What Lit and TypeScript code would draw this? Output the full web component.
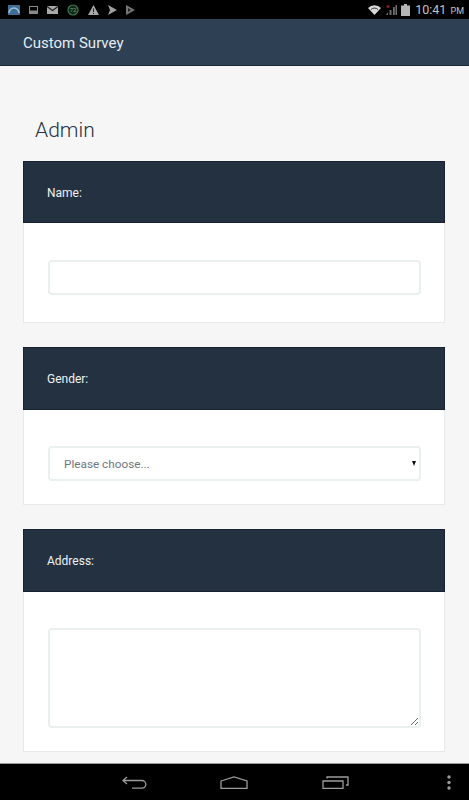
import {LitElement, html, css, svg} from 'lit';
import {customElement, property} from 'lit/decorators.js';

@customElement('survey-panel')
export class SurveyPanel extends LitElement {
  @property()
  label = '';

  static styles = css`
    :host {
      display: block;
      margin-bottom: 24px;
    }
    .head {
      height: 62.5px;
      box-sizing: border-box;
      display: flex;
      align-items: center;
      padding: 1px 0 0 23px;
      background-color: #243140;
      border: 1px solid #18222e;
      color: #eef1f4;
      font-size: 12px;
      font-weight: 400;
    }
    .body {
      background-color: #fff;
      border: 1px solid #e8eaea;
      border-top: 0;
      padding: 36.3px 23px 23.2px 24px;
    }
  `;

  override render() {
    return html`
      <div class="head">${this.label}</div>
      <div class="body"><slot></slot></div>
    `;
  }
}

@customElement('app-root')
export class AppRoot extends LitElement {
  static styles = css`
    :host {
      display: flex;
      flex-direction: column;
      width: 469px;
      height: 800px;
      overflow: hidden;
      font-family: Roboto, "Liberation Sans", sans-serif;
      background-color: #f6f6f6;
    }
    .status {
      height: 19px;
      flex: none;
      display: flex;
      align-items: center;
      justify-content: space-between;
      padding: 0 5px 0 8px;
      background-color: #000;
    }
    .notify, .system {
      display: flex;
      align-items: center;
    }
    .notify {
      gap: 9px;
    }
    .system {
      gap: 4px;
    }
    .clock {
      color: #c4c4c4;
      font-size: 12.5px;
      margin-left: 1px;
      white-space: nowrap;
    }
    .clock small {
      font-size: 9px;
      margin-left: 1px;
    }
    .bar {
      height: 47px;
      flex: none;
      box-sizing: border-box;
      display: flex;
      align-items: center;
      padding: 1px 0 0 23px;
      background-color: #2e4053;
      border-bottom: 1px solid #1c2a38;
      color: #e4edf5;
      font-size: 15px;
    }
    .content {
      flex: 1;
      min-height: 0;
      overflow: hidden;
      padding: 0 24px 0 23px;
    }
    h1 {
      margin: 50.9px 0 18px 12px;
      height: 26px;
      line-height: 26px;
      font-size: 21px;
      font-weight: 300;
      color: #253445;
    }
    input, select, textarea {
      display: block;
      width: 100%;
      box-sizing: border-box;
      margin: 0;
      background-color: #fff;
      border: 2px solid #eaefef;
      border-radius: 4px;
      font-family: inherit;
      font-size: 11.75px;
      color: #6d7780;
      outline: none;
    }
    input, select {
      height: 35px;
    }
    input {
      margin-bottom: 4.4px;
    }
    select {
      appearance: none;
      padding-left: 14px;
    }
    textarea {
      height: 100px;
    }
    .pick {
      position: relative;
    }
    .pick span {
      position: absolute;
      right: 5px;
      top: 15px;
      width: 0;
      height: 0;
      border-left: 2.5px solid transparent;
      border-right: 2.5px solid transparent;
      border-top: 5px solid #111;
    }
    .nav {
      height: 37px;
      flex: none;
      display: flex;
      align-items: center;
      background-color: #000;
      border-top: 1px solid #9a9a9a;
      box-sizing: border-box;
    }
    .nav svg {
      display: block;
    }
    .nav .back {
      margin-left: 122px;
    }
    .nav .home {
      margin-left: 72px;
    }
    .nav .recent {
      margin-left: 74px;
    }
    .nav .more {
      margin-left: 98px;
    }
  `;

  private icon(w: number, body: unknown) {
    return html`<svg width=${w} height="12" viewBox="0 0 ${w} 12">${body}</svg>`;
  }

  override render() {
    return html`
      <div class="status">
        <div class="notify">
          ${this.icon(12, svg`<rect y="1" width="12" height="10" fill="#3f6f96"/><path d="M1 9a5 5 0 0 1 10 0" fill="none" stroke="#9fc0d8" stroke-width="1.5"/>`)}
          ${this.icon(9, svg`<rect x=".5" y="2.5" width="8" height="7" fill="none" stroke="#8a8a8a"/><rect x="1" y="6.5" width="7" height="3" fill="#8a8a8a"/>`)}
          ${this.icon(11, svg`<rect y="2" width="11" height="8" fill="#a8a8a8"/><path d="M0 2.5l5.5 4 5.5-4" fill="none" stroke="#222" stroke-width="1.3"/>`)}
          ${this.icon(12, svg`<circle cx="6" cy="6" r="5" fill="#10261a" stroke="#3f7a4f" stroke-width="1.2"/><text x="6" y="8" font-size="6" text-anchor="middle" fill="#6fa37c">72</text>`)}
          ${this.icon(11, svg`<path d="M5.500 1L11 11H0z" fill="#a8a8a8"/><rect x="5" y="4.500" width="1" height="3.500" fill="#222"/><rect x="5" y="9" width="1" height="1" fill="#222"/>`)}
          ${this.icon(9, svg`<path d="M0 1l9 5-9 5 2-5z" fill="#a0a0a0"/>`)}
          ${this.icon(9, svg`<path d="M0 1l9 5-9 5z" fill="#777"/><path d="M2 4l3 2-3 2z" fill="#222"/>`)}
        </div>
        <div class="system">
          ${this.icon(13, svg`<path d="M0 4a9 9 0 0 1 13 0L6.500 11z" fill="#d8d8d8"/><path d="M3 5.500a5 5 0 0 1 7 0" fill="none" stroke="#333"/>`)}
          ${this.icon(12, svg`<path d="M1 11l2-3v3zM4.500 11V6H6.500v5zM8 11V3h1.800v8zM10.500 11V1H12v10z" fill="#6f6f6f"/><circle cx="3" cy="2.500" r="1.500" fill="#8a1f1f"/>`)}
          ${this.icon(9, svg`<rect y="1.500" width="9" height="10.500" fill="#b5b5b5"/><rect x="3" width="3" height="2" fill="#b5b5b5"/>`)}
          <span class="clock">10:41 <small>PM</small></span>
        </div>
      </div>
      <div class="bar">Custom Survey</div>
      <div class="content">
        <h1>Admin</h1>
        <survey-panel label="Name:">
          <input type="text" />
        </survey-panel>
        <survey-panel label="Gender:">
          <div class="pick">
            <select><option>Please choose...</option></select>
            <span></span>
          </div>
        </survey-panel>
        <survey-panel label="Address:">
          <textarea></textarea>
        </survey-panel>
      </div>
      <div class="nav">
        <svg class="back" width="26" height="13" viewBox="0 0 26 13" fill="none" stroke="#9c9c9c" stroke-width="1.3"><path d="M5 1L1 4.500l4 3.500M1 4.500h19a3.800 3.800 0 0 1 0 7.600h-10"/></svg>
        <svg class="home" width="28" height="13" viewBox="0 0 28 13" fill="none" stroke="#9c9c9c" stroke-width="1.300"><path d="M1 5L14 1l13 4v7.300H1z"/></svg>
        <svg class="recent" width="27" height="13" viewBox="0 0 27 13" fill="none" stroke="#9c9c9c" stroke-width="1.300"><path d="M1 5h20v7.300H1zM5 2.500V1h21v8h-2"/></svg>
        <svg class="more" width="4" height="15" viewBox="0 0 4 15" fill="#9c9c9c"><circle cx="2" cy="2" r="1.700"/><circle cx="2" cy="7.500" r="1.700"/><circle cx="2" cy="13" r="1.700"/></svg>
      </div>
    `;
  }
}
